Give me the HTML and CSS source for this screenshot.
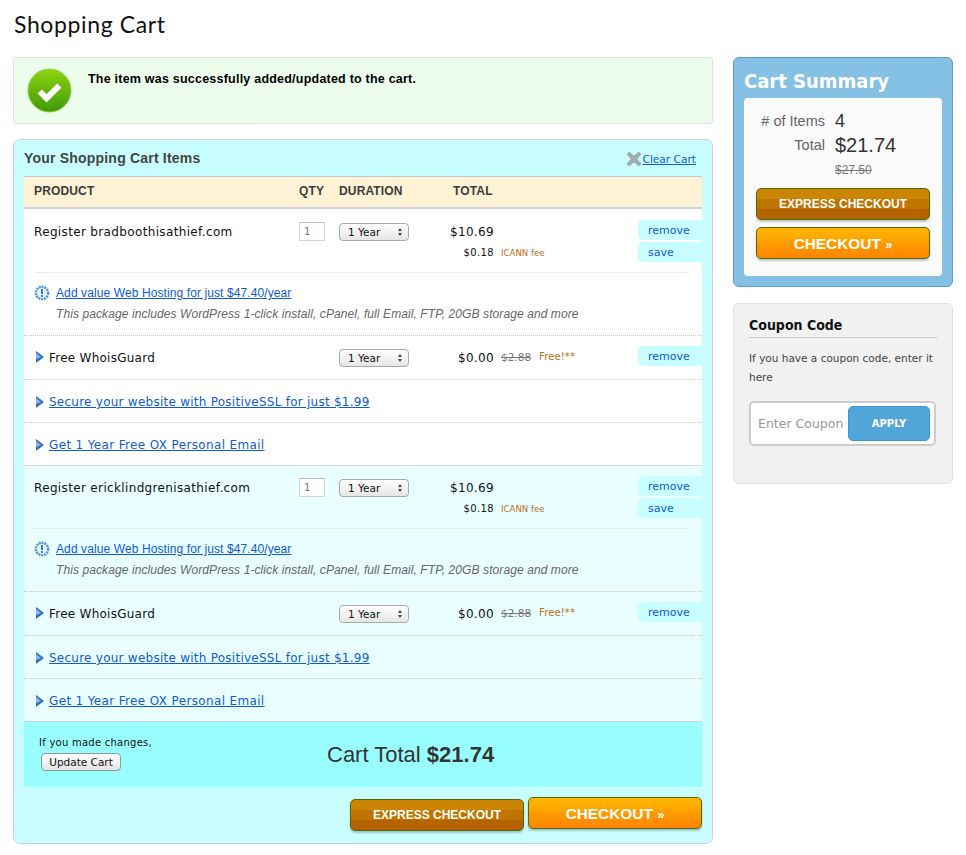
FILE: index.html
```html
<!DOCTYPE html>
<html lang="en">
<head>
<meta charset="utf-8">
<title>Shopping Cart</title>
<link rel="stylesheet" href="styles.css">
</head>
<body>
<h1 class="page-title">Shopping Cart</h1>
<div class="layout">
  <main class="main">
    <div class="notice">
      <svg class="check-icon" width="45" height="45" viewBox="0 0 46 46"><defs><linearGradient id="cg" x1="0" y1="0" x2="0" y2="1"><stop offset="0" stop-color="#8fd40f"/><stop offset="1" stop-color="#3f9a08"/></linearGradient></defs><circle cx="23" cy="23" r="22" fill="url(#cg)" stroke="#8ccf45" stroke-width="1"/><path d="M13 24l7 7 13-13" fill="none" stroke="#fff" stroke-width="6"/></svg>
      <p class="notice-text">The item was successfully added/updated to the cart.</p>
    </div>
    <section class="cart">
      <div class="cart-head">
        <h2 class="cart-title">Your Shopping Cart Items</h2>
        <div class="clear"><svg width="16" height="16" viewBox="0 0 16 16"><path d="M3 1l5 4 5-4 2 2-4 5 4 5-2 2-5-4-5 4-2-2 4-5-4-5z" fill="#a3adab" stroke="#8b9492" stroke-width=".5"/></svg><a href="#">Clear Cart</a></div>
      </div>
      <div class="cols"><span>PRODUCT</span><span>QTY</span><span>DURATION</span><span class="col-total">TOTAL</span></div>

      <div class="item">
        <div class="row row-main">
          <div class="name">Register bradboothisathief.com</div>
          <input class="qty" value="1" aria-label="Quantity">
          <div class="select"><select aria-label="Duration"><option>1 Year</option></select></div>
          <div class="prices"><span>$10.69</span><span class="small">$0.18</span></div>
          <div class="notes"><span class="note">ICANN fee</span></div>
          <div class="actions"><a class="tab" href="#">remove</a><a class="tab" href="#">save</a></div>
        </div>
        <div class="rule"></div>
        <div class="hosting">
          <div class="hosting-line">
            <svg width="16" height="16" viewBox="0 0 16 16"><circle cx="8" cy="8" r="6.2" fill="#e8f4ff" stroke="#4f97dc" stroke-width="2.4" stroke-dasharray="2 .8"/><rect x="7" y="4" width="2" height="5" fill="#2f7fd0"/><rect x="7" y="10" width="2" height="2" fill="#2f7fd0"/></svg>
            <a href="#">Add value Web Hosting for just $47.40/year</a>
          </div>
          <p class="hosting-desc">This package includes WordPress 1-click install, cPanel, full Email, FTP, 20GB storage and more</p>
        </div>
        <div class="row row-addon">
          <div class="name addon"><svg class="tri" width="9" height="12" viewBox="0 0 9 12"><path d="M1 0l8 6-8 6z" fill="#2f6fc4"/><path d="M1 2l5 4-5 2z" fill="#8db7e8"/></svg>Free WhoisGuard</div>
          <div class="spacer"></div>
          <div class="select"><select aria-label="Duration"><option>1 Year</option></select></div>
          <div class="prices"><span>$0.00</span></div>
          <div class="notes"><s class="old">$2.88</s><span class="note note-free">Free!**</span></div>
          <div class="actions"><a class="tab" href="#">remove</a></div>
        </div>
        <div class="row-link"><svg class="tri" width="9" height="12" viewBox="0 0 9 12"><path d="M1 0l8 6-8 6z" fill="#2f6fc4"/><path d="M1 2l5 4-5 2z" fill="#8db7e8"/></svg><a href="#">Secure your website with PositiveSSL for just $1.99</a></div>
        <div class="row-link last"><svg class="tri" width="9" height="12" viewBox="0 0 9 12"><path d="M1 0l8 6-8 6z" fill="#2f6fc4"/><path d="M1 2l5 4-5 2z" fill="#8db7e8"/></svg><a href="#">Get 1 Year Free OX Personal Email</a></div>
      </div>

      <div class="item item-alt">
        <div class="row row-main">
          <div class="name">Register ericklindgrenisathief.com</div>
          <input class="qty" value="1" aria-label="Quantity">
          <div class="select"><select aria-label="Duration"><option>1 Year</option></select></div>
          <div class="prices"><span>$10.69</span><span class="small">$0.18</span></div>
          <div class="notes"><span class="note">ICANN fee</span></div>
          <div class="actions"><a class="tab" href="#">remove</a><a class="tab" href="#">save</a></div>
        </div>
        <div class="rule"></div>
        <div class="hosting">
          <div class="hosting-line">
            <svg width="16" height="16" viewBox="0 0 16 16"><circle cx="8" cy="8" r="6.2" fill="#e8f4ff" stroke="#4f97dc" stroke-width="2.4" stroke-dasharray="2 .8"/><rect x="7" y="4" width="2" height="5" fill="#2f7fd0"/><rect x="7" y="10" width="2" height="2" fill="#2f7fd0"/></svg>
            <a href="#">Add value Web Hosting for just $47.40/year</a>
          </div>
          <p class="hosting-desc">This package includes WordPress 1-click install, cPanel, full Email, FTP, 20GB storage and more</p>
        </div>
        <div class="row row-addon">
          <div class="name addon"><svg class="tri" width="9" height="12" viewBox="0 0 9 12"><path d="M1 0l8 6-8 6z" fill="#2f6fc4"/><path d="M1 2l5 4-5 2z" fill="#8db7e8"/></svg>Free WhoisGuard</div>
          <div class="spacer"></div>
          <div class="select"><select aria-label="Duration"><option>1 Year</option></select></div>
          <div class="prices"><span>$0.00</span></div>
          <div class="notes"><s class="old">$2.88</s><span class="note note-free">Free!**</span></div>
          <div class="actions"><a class="tab" href="#">remove</a></div>
        </div>
        <div class="row-link"><svg class="tri" width="9" height="12" viewBox="0 0 9 12"><path d="M1 0l8 6-8 6z" fill="#2f6fc4"/><path d="M1 2l5 4-5 2z" fill="#8db7e8"/></svg><a href="#">Secure your website with PositiveSSL for just $1.99</a></div>
        <div class="row-link last"><svg class="tri" width="9" height="12" viewBox="0 0 9 12"><path d="M1 0l8 6-8 6z" fill="#2f6fc4"/><path d="M1 2l5 4-5 2z" fill="#8db7e8"/></svg><a href="#">Get 1 Year Free OX Personal Email</a></div>
      </div>

      <div class="total-bar">
        <div class="update"><div class="update-text">If you made changes,</div><button class="update-btn" type="button">Update Cart</button></div>
        <div class="cart-total">Cart Total <b>$21.74</b></div>
      </div>
      <div class="cart-buttons">
        <button class="btn btn-express" type="button">EXPRESS CHECKOUT</button>
        <button class="btn btn-checkout" type="button">CHECKOUT <span class="raquo">»</span></button>
      </div>
    </section>
  </main>
  <aside class="side">
    <section class="summary">
      <h2 class="summary-title">Cart Summary</h2>
      <div class="summary-body">
        <div class="sum-row"><span class="sum-label">#&nbsp;of Items</span><span class="sum-value">4</span></div>
        <div class="sum-row"><span class="sum-label">Total</span><span class="sum-value big">$21.74</span></div>
        <div class="sum-row sum-old"><span class="sum-label"></span><s>$27.50</s></div>
        <button class="btn btn-express" type="button">EXPRESS CHECKOUT</button>
        <button class="btn btn-checkout" type="button">CHECKOUT <span class="raquo">»</span></button>
      </div>
    </section>
    <section class="coupon">
      <h2 class="coupon-title">Coupon Code</h2>
      <p class="coupon-text">If you have a coupon code, enter it here</p>
      <div class="coupon-form"><input class="coupon-input" placeholder="Enter Coupon" aria-label="Coupon"><button class="apply" type="button">APPLY</button></div>
    </section>
  </aside>
</div>
</body>
</html>
```
FILE: styles.css
```css
* { box-sizing: border-box; }
html, body { margin: 0; padding: 0; }
body { background: #fff; color: #111; font-family: "DejaVu Sans", sans-serif; padding: 0 13px; width: 966px; height: 855px; overflow: hidden; }
a { color: #0f5bd8; }
p, h1, h2 { margin: 0; }
.page-title { font: 400 23px/30px "Lato", sans-serif; letter-spacing: .62px; padding: 9px 0 18px 1px; color: #111; }
.layout { display: flex; gap: 20px; align-items: flex-start; }
.main { width: 700px; }
.side { width: 220px; display: flex; flex-direction: column; gap: 16px; }

.notice { height: 67px; background: #ecfeeb; border: 1px dotted #c4d2c4; border-radius: 4px; display: flex; padding: 10px 13px; gap: 16px; }
.check-icon { flex: none; }
.notice-text { font: 700 12.5px/16px "Liberation Sans", sans-serif; padding-top: 3px; letter-spacing: .22px; color: #000; }

.cart { margin-top: 15px; height: 705px; background: #c8feff; border: 1px solid #c9cdf6; border-radius: 7px; padding: 0 10px; }
.cart-head { height: 36px; display: flex; justify-content: space-between; align-items: center; padding-top: 1px; }
.cart-title { font: 700 14px/18px "Liberation Sans", sans-serif; color: #444; letter-spacing: .2px; margin-top: -2px; }
.clear { display: flex; align-items: center; gap: 1px; font-size: 10.6px; padding-right: 6px; }

.cols { height: 33px; background: #fdf2d3; border-top: 1px solid #c5c9c9; border-bottom: 2px solid #cdd3e0; display: grid; grid-template-columns: 265px 40px 80px 120px; align-items: center; padding: 0 0 2px 10px; font: 700 12px/14px "Liberation Sans", sans-serif; letter-spacing: .15px; color: #3c3c3c; }
.col-total { padding-left: 34px; }

.item { background: #fff; border-bottom: 1px solid #d3dcec; height: 257px; }
.item-alt { background: #e8feff; border-bottom: 0; height: 255px; }
.row { display: grid; grid-template-columns: 265px 40px 100px 55px 144px 64px; padding-left: 10px; font-size: 12px; }
.row-main { height: 63px; padding-top: 12px; }
.item-alt .row-main { height: 62px; padding-top: 11px; }
.row-addon { height: 44px; padding-top: 10px; border-bottom: 1px dotted #c9c9c9; }
.name { line-height: 22px; letter-spacing: .35px; }
.addon { display: flex; align-items: flex-start; height: 22px; margin-top: 1px; letter-spacing: .25px; }
.addon .tri { margin-top: 4px; }
.tri { flex: none; margin-right: 5px; margin-left: 1px; }
.qty { width: 26px; height: 19px; margin-top: 1px; border: 1px solid #d5d5d5; border-top-color: #bdbdbd; background: #fff; font: 10px "DejaVu Sans", sans-serif; color: #777; padding: 0 4px; }
.select { width: 70px; height: 18px; margin-top: 2px; position: relative; }
.row-addon .select { margin-top: 3px; }
.select select { appearance: none; width: 100%; height: 100%; border: 1px solid #a9a9a9; border-radius: 4px; background: linear-gradient(#fff, #e6e6e6); font: 10.5px "DejaVu Sans", sans-serif; color: #111; padding: 0 0 0 8px; }
.select::before, .select::after { content: ""; position: absolute; right: 7px; border-left: 2.5px solid transparent; border-right: 2.5px solid transparent; pointer-events: none; }
.select::before { top: 5px; border-bottom: 3px solid #444; }
.select::after { top: 10px; border-top: 3px solid #444; }
.prices { display: flex; flex-direction: column; align-items: flex-end; font-size: 12px; line-height: 22px; letter-spacing: .35px; }
.row-addon .prices { padding-top: 1px; }
.small { font-size: 10px; line-height: 20px; }
.notes { padding-left: 7px; display: flex; gap: 8px; align-items: flex-start; }
.row-addon .notes { padding-top: 1px; }
.note { color: #c0701a; font-size: 8.6px; line-height: 20px; padding-top: 22px; }
.note-free { font-size: 10px; padding-top: 0; letter-spacing: .1px; }
.old { color: #777; font-size: 10.5px; line-height: 20px; }
.actions { display: flex; flex-direction: column; gap: 2px; margin-top: -1px; }
.row-addon .actions { margin-top: 0; }
.tab { display: block; height: 20px; background: #c8feff; border-radius: 5px 0 0 5px; padding-left: 10px; font-size: 11px; line-height: 21px; color: #0f5bd8; text-decoration: none; }
.rule { margin: 0 15px 0 10px; border-top: 1px solid #e9eded; }
.item-alt .rule { border-color: #dfeeee; }
.hosting { height: 63px; padding: 12px 0 0 10px; border-bottom: 1px dotted #c9c9c9; font-family: "Liberation Sans", sans-serif; }
.hosting-line { display: flex; align-items: center; gap: 6px; font-size: 12px; line-height: 16px; letter-spacing: .1px; }
.hosting-line svg { flex: none; }
.hosting-desc { font-size: 12px; line-height: 16px; font-style: italic; color: #666; margin: 5px 0 0 22px; letter-spacing: .09px; }
.row-link { height: 43px; padding: 2px 0 0 10px; display: flex; align-items: center; font-size: 12px; letter-spacing: .25px; border-bottom: 1px dotted #c9c9c9; }
.row-link.last { border-bottom: 0; height: 42px; letter-spacing: .35px; }

.total-bar { height: 66px; background: #99feff; border-top: 1px solid #c9cdf6; display: flex; align-items: center; padding-left: 15px; }
.update { width: 288px; align-self: flex-start; margin-top: 14px; }
.update-text { font-size: 10px; line-height: 14px; letter-spacing: .25px; }
.update-btn { display: block; margin: 3px 0 0 2px; width: 80px; height: 18px; padding: 0; font: 10.5px "DejaVu Sans", sans-serif; color: #111; border: 1px solid #8a9a9a; border-radius: 4px; background: linear-gradient(#fff, #e4e4e4); }
.cart-total { font: 400 22px/26px "Liberation Sans", sans-serif; color: #333; }

.cart-buttons { display: flex; justify-content: flex-end; align-items: flex-start; gap: 4px; padding-top: 11px; }
.btn { display: block; border: 1px solid #4d6b08; border-radius: 5px; color: #fff; font-family: "Liberation Sans", sans-serif; font-weight: 700; padding: 0; box-shadow: 0 2px 2px rgba(60,80,80,.3); width: 174px; }
.btn-express { height: 32px; margin-top: 1px; font-size: 12px; background: linear-gradient(#cc8500 0, #cc8500 33%, #c07400 33%, #c07400 66%, #b56200 66%, #b56200 100%); }
.btn-checkout { height: 32px; margin-top: -1px; font-size: 15.4px; padding-top: 1px; background: linear-gradient(#ffb700 0, #ffa400 40%, #ff9500 60%, #ff8600 100%); }
.raquo { font-size: 13px; }

.summary { height: 230px; background: #85c0e5; border: 1px solid #5f98d2; border-radius: 6px; padding: 0 10px; }
.summary-title { font: 700 20px/24px "DejaVu Sans", sans-serif; font-stretch: condensed; color: #fff; height: 40px; padding-top: 11px; }
.summary-body { height: 178px; background: #fafafa; border-radius: 4px; padding: 11px 12px; font-family: "Liberation Sans", sans-serif; }
.sum-row { display: grid; grid-template-columns: 69px 1fr; column-gap: 10px; align-items: center; height: 24px; }
.sum-label { text-align: right; color: #666; font-size: 14.5px; white-space: nowrap; }
.sum-value { color: #333; font-size: 18px; }
.sum-value.big { font-size: 20px; }
.sum-old { height: 26px; color: #777; font-size: 12px; }
.summary .btn-express { margin-top: 5px; }
.summary .btn-checkout { margin-top: 7px; }

.coupon { height: 181px; background: #f1f1f1; border: 1px solid #e0e0e0; border-radius: 6px; padding: 12px 15px; }
.coupon-title { font: 700 14px/18px "DejaVu Sans", sans-serif; font-stretch: condensed; color: #111; padding-bottom: 3px; border-bottom: 1px solid #ccc; }
.coupon-text { font-size: 10.5px; line-height: 19px; color: #444; margin-top: 11px; }
.coupon-form { margin-top: 14px; width: 187px; height: 45px; border: 2px solid #ccc; border-radius: 5px; background: #fff; display: flex; align-items: center; padding: 0 4px 0 7px; }
.coupon-input { width: 90px; border: 0; background: none; padding: 0; font: 12.5px "DejaVu Sans", sans-serif; outline: none; }
.coupon-input::placeholder { color: #999; }
.apply { width: 82px; height: 35px; background: #52a5d8; border: 1px solid #3c97dc; border-radius: 5px; color: #fff; font: 700 10px "DejaVu Sans", sans-serif; padding: 0; }
```
